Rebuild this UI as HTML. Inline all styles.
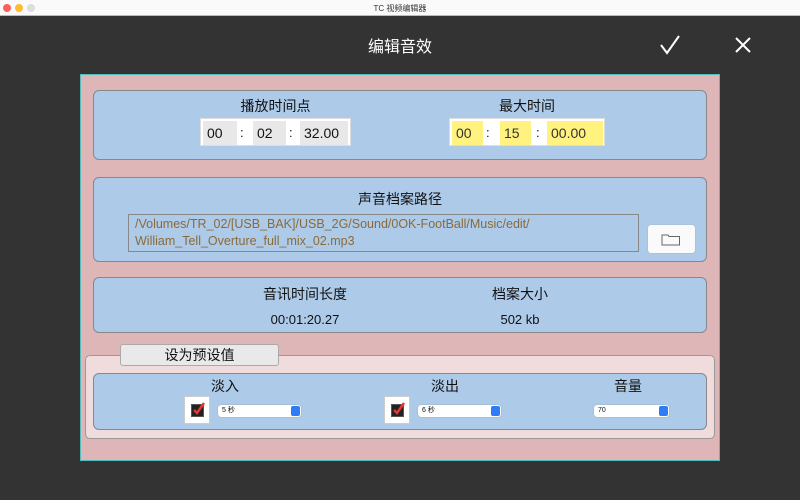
<!DOCTYPE html>
<html><head><meta charset="utf-8"><style>
*{margin:0;padding:0;box-sizing:border-box}
body{width:800px;height:500px;background:#333;position:relative;overflow:hidden;font-family:"Liberation Sans","Noto Sans CJK SC",sans-serif;color:#111}
.a{position:absolute}
.tb{left:0;top:0;width:800px;height:16px;background:#fafafa;border-bottom:1px solid #bbb}
.dot{width:8px;height:8px;border-radius:50%;top:4px}
.blue{background:#adcae9;border:1.5px solid #888;border-radius:6px}
.lbl{font-size:14px;text-align:center}
.f{background:#e8e8e8;font-size:14px;padding-left:4px;line-height:24px;top:2px;height:24px}
.y{background:#fff27f;color:#333}
.sel{background:#fff;border-radius:3px;height:12px;font-size:7px;line-height:12px;padding-left:4px;box-shadow:0 0 1px #888}
.arr{position:absolute;right:1px;top:1px;width:9px;height:10px;background:#2f7cf6;border-radius:2px}
.cb{width:26px;height:28px;background:#fff;border:1px solid #ccc}
.cb i{position:absolute;left:6px;top:7px;width:13px;height:13px;background:#222;border:1px solid #555}
.cb svg{position:absolute;left:7px;top:5px}
</style></head><body>
<div class="a tb"></div>
<div class="a dot" style="left:3px;background:#fe5f57"></div>
<div class="a dot" style="left:15px;background:#febc2e"></div>
<div class="a dot" style="left:27px;background:#ddd"></div>
<div class="a" style="left:0;width:800px;top:3px;text-align:center;font-size:8px;color:#333">TC 视频编辑器</div>
<div class="a" style="left:0;width:800px;top:33px;text-align:center;font-size:16px;color:#fff">编辑音效</div>
<svg class="a" style="left:658px;top:34px" width="24" height="22"><path d="M3 11 L9 19 L21 2" stroke="#fff" stroke-width="2" fill="none"/></svg>
<svg class="a" style="left:734px;top:36px" width="18" height="18"><path d="M2 2L16 16M16 2L2 16" stroke="#fff" stroke-width="2"/></svg>
<div class="a" style="left:80px;top:74px;width:640px;height:387px;background:#dfb6b7;border:1px solid #5bb;"></div>
<div class="a blue" style="left:93px;top:90px;width:614px;height:70px"></div>
<div class="a lbl" style="left:200px;width:151px;top:96px">播放时间点</div>
<div class="a" style="left:200px;top:118px;width:151px;height:28px;background:#fff;border:1px solid #ddd">
<div class="a f" style="left:2px;width:34px">00</div><div class="a" style="left:39px;top:6px;font-size:13px">:</div>
<div class="a f" style="left:52px;width:33px">02</div><div class="a" style="left:88px;top:6px;font-size:13px">:</div>
<div class="a f" style="left:99px;width:48px">32.00</div></div>
<div class="a lbl" style="left:449px;width:156px;top:96px">最大时间</div>
<div class="a" style="left:449px;top:118px;width:156px;height:28px;background:#fff;border:1px solid #ddd">
<div class="a f y" style="left:2px;width:31px">00</div><div class="a" style="left:36px;top:6px;font-size:13px">:</div>
<div class="a f y" style="left:50px;width:31px">15</div><div class="a" style="left:86px;top:6px;font-size:13px">:</div>
<div class="a f y" style="left:97px;width:56px">00.00</div></div>
<div class="a blue" style="left:93px;top:177px;width:614px;height:85px"></div>
<div class="a lbl" style="left:93px;width:614px;top:189px">声音档案路径</div>
<div class="a" style="left:128px;top:214px;width:511px;height:38px;border:1px solid #888;font-size:12.5px;color:#8a6a3a;line-height:17px;padding:1px 6px;white-space:nowrap">/Volumes/TR_02/[USB_BAK]/USB_2G/Sound/0OK-FootBall/Music/edit/<br>William_Tell_Overture_full_mix_02.mp3</div>
<div class="a" style="left:648px;top:225px;width:47px;height:28px;background:#fafafa;border-radius:3px;box-shadow:0 0 1px #999"></div>
<svg class="a" style="left:661px;top:232px" width="20" height="14"><path d="M1 3h6l1 1.5h10.5v8.5h-17.5z" fill="none" stroke="#666" stroke-width="1"/></svg>
<div class="a blue" style="left:93px;top:277px;width:614px;height:56px"></div>
<div class="a lbl" style="left:230px;width:150px;top:284px">音讯时间长度</div>
<div class="a lbl" style="left:470px;width:100px;top:284px">档案大小</div>
<div class="a lbl" style="left:230px;width:150px;top:312px;font-size:13px">00:01:20.27</div>
<div class="a lbl" style="left:470px;width:100px;top:312px;font-size:13px">502 kb</div>
<div class="a" style="left:85px;top:355px;width:630px;height:84px;background:#f0dcdd;border:1px solid #999;border-radius:5px"></div>
<div class="a" style="left:120px;top:344px;width:159px;height:22px;background:#e9e9e9;border:1px solid #aaa;border-radius:3px;font-size:14px;text-align:center;line-height:20px">设为预设值</div>
<div class="a blue" style="left:93px;top:373px;width:614px;height:57px"></div>
<div class="a lbl" style="left:200px;width:50px;top:376px">淡入</div>
<div class="a lbl" style="left:420px;width:50px;top:376px">淡出</div>
<div class="a lbl" style="left:603px;width:50px;top:376px">音量</div>
<div class="a cb" style="left:184px;top:396px"><i></i><svg width="14" height="14"><path d="M2 8L5 11L12 1" stroke="#e33" stroke-width="2.5" fill="none"/></svg></div>
<div class="a cb" style="left:384px;top:396px"><i></i><svg width="14" height="14"><path d="M2 8L5 11L12 1" stroke="#e33" stroke-width="2.5" fill="none"/></svg></div>
<div class="a sel" style="left:218px;top:405px;width:83px">5 秒<span class="arr"></span></div>
<div class="a sel" style="left:418px;top:405px;width:83px">6 秒<span class="arr"></span></div>
<div class="a sel" style="left:594px;top:405px;width:75px">70<span class="arr"></span></div>
</body></html>
